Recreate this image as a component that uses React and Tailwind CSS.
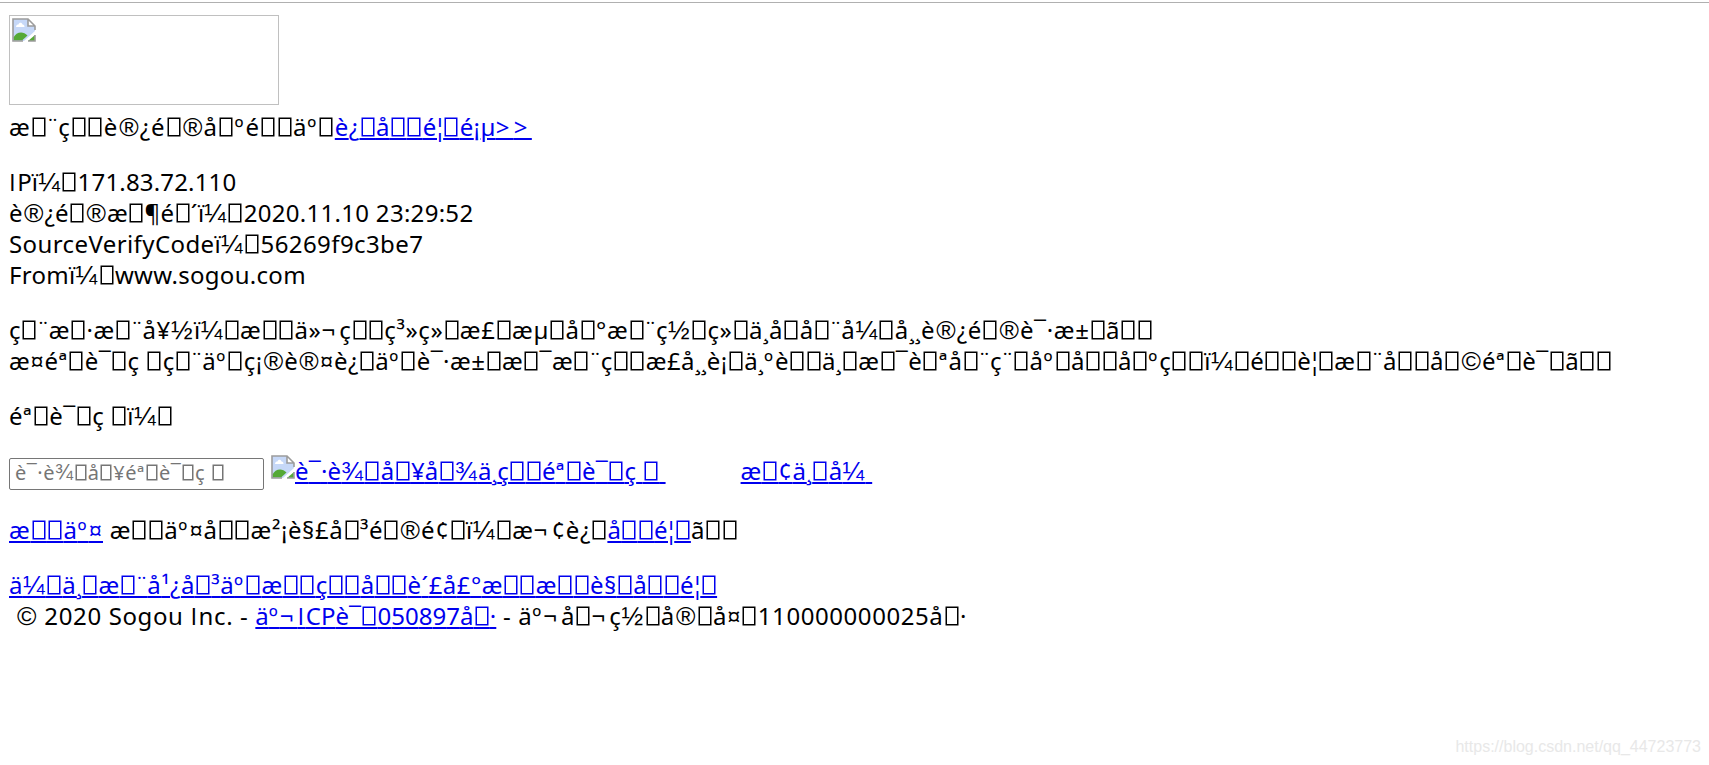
// Glyphs whose font or advance needs adjusting next to the rest of the line
const GLYPH_CLASS = {
  "¼": "font-['Liberation_Sans'] text-[1.08em] leading-none tracking-[0.05em]",
  "½": "font-['Liberation_Sans'] text-[1.08em] leading-none tracking-[0.05em]",
  "¾": "font-['Liberation_Sans'] text-[1.08em] leading-none tracking-[0.05em]",
  "®": "ml-[0.04em] font-['Liberation_Sans'] text-[1.1em] leading-none tracking-[0.04em]",
  "©": "ml-[0.04em] font-['Liberation_Sans'] text-[1.1em] leading-none tracking-[0.04em]",
  "I": "font-['Open_Sans'] leading-none tracking-[0.06em]",
  "º": "tracking-[0.08em]",
  "ª": "tracking-[0.05em]",
  "¬": "tracking-[0.17em]",
  "¨": "-ml-[0.06em] tracking-[-0.06em]",
  "¦": "-ml-[0.14em] tracking-[-0.14em]",
  ">": "tracking-[0.18em]",
};

// "□" stands for a character the font can't show
function Garbled({ text }) {
  return [...text].map((c, i) => {
    if (c === "□") {
      return (
        <span
          key={i}
          className="relative tracking-[0.4275em] before:absolute before:bottom-[0.29em] before:left-[0.09em] before:h-[0.75em] before:w-[0.5em] before:border before:border-current before:shadow-[0_0_0_0.5px]"
        >
          {"\u00a0"}
        </span>
      );
    }
    return GLYPH_CLASS[c] ? <span key={i} className={GLYPH_CLASS[c]}>{c}</span> : c;
  });
}

function Text({ children, className = "" }) {
  return (
    <span className={className}>
      <Garbled text={children} />
    </span>
  );
}

function Anchor({ children, className = "" }) {
  return (
    <a href="#" className={`text-[#0000ee] underline decoration-2 underline-offset-2 ${className}`}>
      <Garbled text={children} />
    </a>
  );
}

function BrokenImage() {
  return (
    <svg viewBox="0 0 24 24" className="h-6 w-6 shrink-0">
      <path d="M1 1h15l7 7v5L12 23H1z" fill="#c6d8f8" />
      <path d="M4 9c0-2 1.500-2.500 2.500-2.500c.5-2.500 3.500-2.500 4 0c1.500 0 2 1 2 2.500z" fill="#fff" />
      <path d="M1.500 22.500v-3C4 14 11 12.500 15.500 17.500L10 22.500z" fill="#55a936" />
      <path d="M16 1v7h7z" fill="#fff" />
      <path d="M11 23H1V1h15l7 7v4M16 1v7h7" fill="none" stroke="#9c9c9c" strokeWidth="1.600" />
      <path d="M16 23l7-6v6z" fill="#55a936" />
      <path d="M16 23h7v-6" fill="none" stroke="#9c9c9c" strokeWidth="1.600" />
    </svg>
  );
}

export default function App() {
  return (
    <div className="flex h-[765px] flex-col overflow-hidden bg-white font-['Noto_Sans',sans-serif] text-[24px] leading-[31px] text-black whitespace-pre">
      <div className="mt-[2px] h-px shrink-0 bg-[#b0b0b0]" />

      <div className="pl-[9px]">
        <div className="mt-3 mb-1.5 h-[90px] w-[270px] border border-[#c0c0c0] p-[2px]">
          <BrokenImage />
        </div>
        <div>
          <Text className="tracking-[0.93px]">æ□¨ç□□è®¿é□®å□ºé□□äº□</Text>
          <Anchor className="tracking-[0.35px]">{"è¿□å□□é¦□é¡µ>>"}</Anchor>
        </div>

        <div className="mt-6"><Text className="tracking-[0.16px]">IPï¼□171.83.72.110</Text></div>
        <div><Text className="tracking-[0.28px]">è®¿é□®æ□¶é□´ï¼□2020.11.10 23:29:52</Text></div>
        <div><Text className="tracking-[0.4px]">SourceVerifyCodeï¼□56269f9c3be7</Text></div>
        <div><Text className="tracking-[0.29px]">Fromï¼□www.sogou.com</Text></div>

        <div className="mt-6">
          <Text className="tracking-[0.62px]">ç□¨æ□·æ□¨å¥½ï¼□æ□□ä»¬ç□□ç³»ç»□æ£□æµ□å□°æ□¨ç½□ç»□ä¸å□å□¨å¼□å¸¸è®¿é□®è¯·æ±□ã□□</Text>
        </div>
        <div>
          <Text className="tracking-[0.45px]">æ¤éª□è¯□ç □ç□¨äº□ç¡®è®¤è¿□äº□è¯·æ±□æ□¯æ□¨ç□□æ£å¸¸è¡□ä¸ºè□□ä¸□æ□¯è□ªå□¨ç¨□åº□å□□å□ºç□□ï¼□é□□è¦□æ□¨å□□å□©éª□è¯□ã□□</Text>
        </div>

        <div className="mt-6"><Text className="tracking-[0.42px]">éª□è¯□ç □ï¼□</Text></div>

        <div className="mt-6 flex h-[35px] items-start">
          <div className="mt-[3px] mr-[7px] h-8 w-[255px] rounded-[2px] border border-[#767676] pl-[5px] text-[20px] leading-[27px] text-[#757575]">
            <Text className="tracking-[0.5px]">è¯·è¾□å□¥éª□è¯□ç □</Text>
          </div>
          <BrokenImage />
          <Anchor className="tracking-[0.2px]">{"è¯·è¾□å□¥å□¾ä¸ç□□éª□è¯□ç □\u00a0"}</Anchor>
          <Anchor className="ml-[75px] tracking-[0.44px]">{"æ□¢ä¸□å¼\u00a0"}</Anchor>
        </div>

        <div className="mt-6">
          <Anchor className="tracking-[0.7px]">æ□□äº¤</Anchor>
          <Text className="tracking-[0.59px]">{" æ□□äº¤å□□æ²¡è§£å□³é□®é¢□ï¼□æ¬¢è¿□"}</Text>
          <Anchor className="tracking-[0.23px]">å□□é¦□</Anchor>
          <Text className="tracking-[0.53px]">ã□□</Text>
        </div>

        <div className="mt-6">
          <Anchor className="tracking-[0.43px]">ä¼□ä¸□æ□¨å¹¿å□³äº□æ□□ç□□å□□è´£å£°æ□□æ□□è§□å□□é¦□</Anchor>
        </div>
        <div>
          <Text className="tracking-[0.62px]">{"\u00a0© 2020 Sogou Inc. - "}</Text>
          <Anchor>äº¬ICPè¯□050897å□·</Anchor>
          <Text className="tracking-[0.56px]">{" - äº¬å□¬ç½□å®□å¤□110000000025å□·"}</Text>
        </div>
      </div>

      <div className="mt-auto mr-2 mb-[8px] self-end font-['Liberation_Sans',sans-serif] text-[16px] leading-5 text-[#e8e8e8]">
        https://blog.csdn.net/qq_44723773
      </div>
    </div>
  );
}
